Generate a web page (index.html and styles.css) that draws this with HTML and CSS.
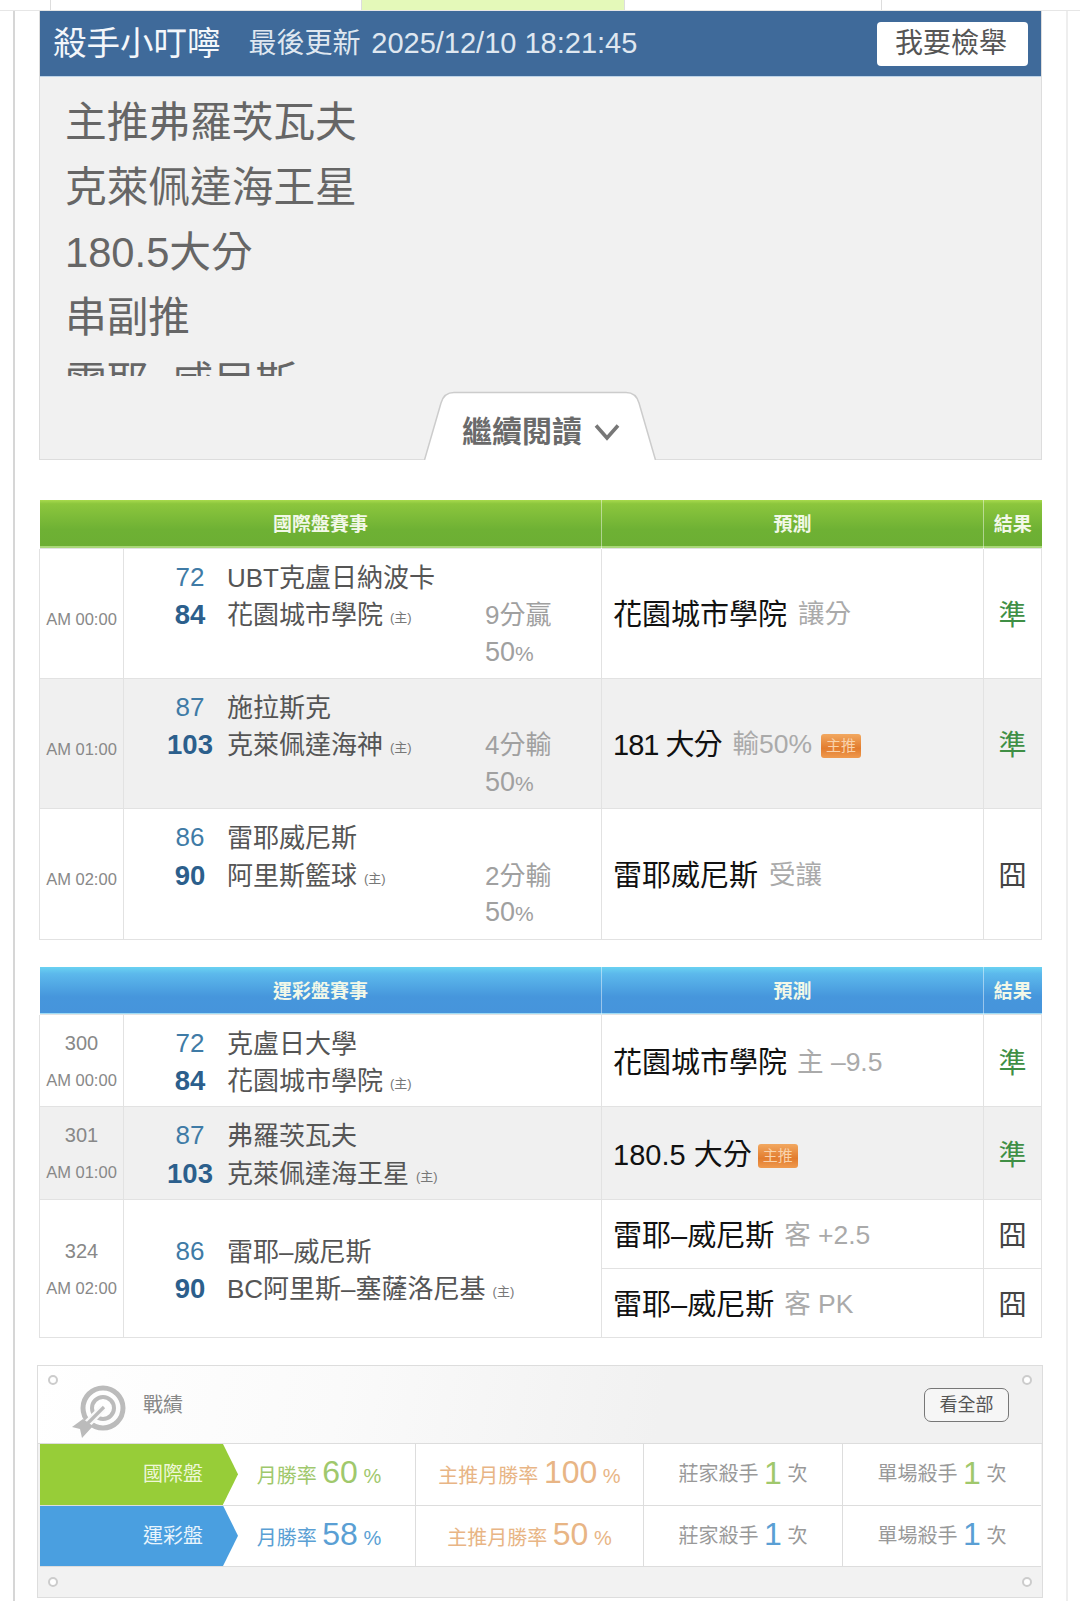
FILE: index.html
```html
<!DOCTYPE html>
<html lang="zh-Hant">
<head>
<meta charset="utf-8">
<title>殺手小叮嚀</title>
<link rel="stylesheet" href="styles.css">
</head>
<body>
<nav class="topband">
  <span class="tb tb-a"></span><span class="tb tb-b"></span><span class="tb tb-c"></span><span class="tb tb-d"></span>
</nav>
<main class="frame">
  <section class="panel">
    <header class="panel-head">
      <span class="author">殺手小叮嚀</span>
      <span class="updated">最後更新 <span class="stamp">2025/12/10 18:21:45</span></span>
      <button class="report">我要檢舉</button>
    </header>
    <div class="panel-body">
      <div class="article">
        <p>主推弗羅茨瓦夫</p>
        <p>克萊佩達海王星</p>
        <p>180.5大分</p>
        <p>串副推</p>
        <p>雷耶–威尼斯</p>
      </div>
    </div>
    <div class="more">
      <svg class="more-shape" viewBox="0 0 232 69" width="232" height="69"><path d="M0.5 69 L17 12 Q20 1.5 30 1.5 L202 1.5 Q212 1.5 215 12 L231.5 69" fill="#fff" stroke="#ccc" stroke-width="1.5"/></svg>
      <span class="more-text">繼續閱讀</span>
      <svg class="more-chev" viewBox="0 0 26 18" width="26" height="18"><path d="M2 2.5 L13 15 L24 2.5" fill="none" stroke="#777" stroke-width="3.6"/></svg>
    </div>
  </section>

  <table class="games green">
    <colgroup><col class="c1"><col class="c2"><col class="c3"><col class="c4"></colgroup>
    <thead><tr><th colspan="2">國際盤賽事</th><th>預測</th><th>結果</th></tr></thead>
    <tbody>
      <tr class="r130">
        <td class="time"><span class="t offset">AM 00:00</span></td>
        <td><div class="match"><span class="s">72</span><span class="n">UBT克盧日納波卡</span><span class="gap"></span><b class="s">84</b><span class="n">花園城市學院<small>(主)</small></span><span class="res">9分贏</span><span class="s"></span><span class="n"></span><span class="res pct">50<i>%</i></span></div></td>
        <td class="pred"><span class="pick">花園城市學院</span><span class="sub sp">讓分</span></td>
        <td class="out win">準</td>
      </tr>
      <tr class="r130 alt">
        <td class="time"><span class="t offset">AM 01:00</span></td>
        <td><div class="match"><span class="s">87</span><span class="n">施拉斯克</span><span class="gap"></span><b class="s">103</b><span class="n">克萊佩達海神<small>(主)</small></span><span class="res">4分輸</span><span class="s"></span><span class="n"></span><span class="res pct">50<i>%</i></span></div></td>
        <td class="pred"><span class="pick tight">181 大分</span><span class="sub sp">輸50%</span><span class="badge">主推</span></td>
        <td class="out win">準</td>
      </tr>
      <tr class="r131">
        <td class="time"><span class="t offset">AM 02:00</span></td>
        <td><div class="match"><span class="s">86</span><span class="n">雷耶威尼斯</span><span class="gap"></span><b class="s">90</b><span class="n">阿里斯籃球<small>(主)</small></span><span class="res">2分輸</span><span class="s"></span><span class="n"></span><span class="res pct">50<i>%</i></span></div></td>
        <td class="pred"><span class="pick">雷耶威尼斯</span><span class="sub sp">受讓</span></td>
        <td class="out">囧</td>
      </tr>
    </tbody>
  </table>

  <table class="games blue">
    <colgroup><col class="c1"><col class="c2"><col class="c3"><col class="c4"></colgroup>
    <thead><tr><th colspan="2">運彩盤賽事</th><th>預測</th><th>結果</th></tr></thead>
    <tbody>
      <tr class="r92">
        <td class="time"><span class="no">300</span><span class="t">AM 00:00</span></td>
        <td><div class="match two"><span class="s">72</span><span class="n">克盧日大學</span><b class="s">84</b><span class="n">花園城市學院<small>(主)</small></span></div></td>
        <td class="pred"><span class="pick">花園城市學院</span><span class="sub">主 –9.5</span></td>
        <td class="out win">準</td>
      </tr>
      <tr class="r93 alt">
        <td class="time"><span class="no">301</span><span class="t">AM 01:00</span></td>
        <td><div class="match two"><span class="s">87</span><span class="n">弗羅茨瓦夫</span><b class="s">103</b><span class="n">克萊佩達海王星<small>(主)</small></span></div></td>
        <td class="pred"><span class="pick">180.5 大分</span><span class="badge">主推</span></td>
        <td class="out win">準</td>
      </tr>
      <tr class="r69">
        <td class="time" rowspan="2"><span class="no">324</span><span class="t">AM 02:00</span></td>
        <td rowspan="2"><div class="match two"><span class="s">86</span><span class="n">雷耶–威尼斯</span><b class="s">90</b><span class="n">BC阿里斯–塞薩洛尼基<small>(主)</small></span></div></td>
        <td class="pred"><span class="pick">雷耶–威尼斯</span><span class="sub">客 +2.5</span></td>
        <td class="out">囧</td>
      </tr>
      <tr class="r69">
        <td class="pred"><span class="pick">雷耶–威尼斯</span><span class="sub">客 PK</span></td>
        <td class="out">囧</td>
      </tr>
    </tbody>
  </table>

  <section class="stats">
    <span class="dot d-tl"></span><span class="dot d-tr"></span><span class="dot d-bl"></span><span class="dot d-br"></span>
    <header class="stats-head">
      <svg class="target" viewBox="0 0 60 62" width="60" height="62">
        <circle cx="33" cy="27" r="20" fill="none" stroke="#bbb" stroke-width="5"/>
        <circle cx="33" cy="27" r="11" fill="none" stroke="#bbb" stroke-width="4"/>
        <path d="M33 27 L12 48" stroke="#fafafa" stroke-width="8"/>
        <path d="M34 26 L15 45" stroke="#bbb" stroke-width="3.2"/>
        <path d="M2 46 L13 38 L23 45 L12 57 L10 48 Z" fill="#bbb"/>
      </svg>
      <h2 class="stats-title">戰績</h2>
      <a class="all">看全部</a>
    </header>
    <div class="stats-grid g">
      <div class="lab">國際盤</div>
      <div class="cell"><span class="cg">月勝率 <em>60</em> %</span></div>
      <div class="cell"><span class="co">主推月勝率 <em>100</em> %</span></div>
      <div class="cell">莊家殺手 <em class="cg">1</em> 次</div>
      <div class="cell">單場殺手 <em class="cg">1</em> 次</div>
    </div>
    <div class="stats-grid b">
      <div class="lab">運彩盤</div>
      <div class="cell"><span class="cb">月勝率 <em>58</em> %</span></div>
      <div class="cell"><span class="co">主推月勝率 <em>50</em> %</span></div>
      <div class="cell">莊家殺手 <em class="cb">1</em> 次</div>
      <div class="cell">單場殺手 <em class="cb">1</em> 次</div>
    </div>
    <div class="stats-foot"></div>
  </section>
</main>
</body>
</html>
```
FILE: styles.css
```css
* { box-sizing: border-box; }
html, body { margin: 0; padding: 0; }
body {
  background: #fff;
  width: 1080px;
  height: 1601px;
  overflow: hidden;
  font-family: "Liberation Sans", "Noto Sans CJK TC", sans-serif;
}
.topband {
  display: flex;
  height: 11px;
  padding: 0 40px 0 50px;
  border-bottom: 1px solid #e6e6e6;
}
.tb { display: block; border-left: 1px solid #ddd; }
.tb-a { width: 311px; }
.tb-b { width: 263px; background: #e4f9b9; }
.tb-c { width: 257px; }
.tb-d { width: 159px; }
.frame {
  margin: 0 12px 0 13px;
  height: 1590px;
  padding: 0 25px 0 24px;
  border-left: 2px solid #d6d6d6;
  border-right: 2px solid #eee;
}
/* article panel */
.panel {
  position: relative;
  height: 449px;
  margin-right: -1px;
  background: #f1f1f1;
  border: 1px solid #ddd;
  border-top: 0;
}
.panel-head {
  display: flex;
  align-items: center;
  height: 66px;
  padding: 0 13px;
  background: #3f6a9a;
  border-bottom: 1px solid #bcd3e8;
  color: #fff;
}
.author { font-size: 33.5px; line-height: 1; color: #f4f7fb; }
.updated { margin-left: 28px; font-size: 28px; line-height: 1; color: #dfe7f0; }
.stamp { margin-left: 3px; font-size: 29px; }
.report {
  margin-left: auto;
  width: 151px;
  height: 44px;
  padding: 0 3px 0 0;
  border: 0;
  border-radius: 4px;
  background: #fff;
  color: #555;
  font: inherit;
  font-size: 28px;
  line-height: 44px;
}
.panel-body { padding: 13px 0 0 25px; }
.article { height: 286px; overflow: hidden; color: #666; font-size: 41.7px; line-height: 65px; }
.article p { margin: 0; }
.more {
  position: absolute;
  left: 384px;
  bottom: -1px;
  width: 232px;
  height: 69px;
  display: flex;
  align-items: center;
  justify-content: center;
  gap: 12px;
  padding: 12px 0 0 2px;
}
.more-shape { position: absolute; left: 0; top: 0; }
.more-text { position: relative; font-size: 30px; font-weight: 700; color: #6a6a6a; line-height: 1; }
.more-chev { position: relative; }
/* tables */
.games {
  width: 1002px;
  margin-top: 40px;
  border-collapse: collapse;
  table-layout: fixed;
}
.blue { margin-top: 27px; }
.c1 { width: 84px; }
.c2 { width: 478px; }
.c3 { width: 382px; }
.c4 { width: 58px; }
.games th {
  height: 48px;
  padding: 0 0 2px;
  font-size: 19px;
  font-weight: 700;
  color: #f2f8e8;
  border-left: 1px solid rgba(255, 255, 255, .45);
}
.green thead tr {
  background: linear-gradient(#a8da4d 0, #8cc63d 8%, #6eb134 62%, #6cae33 100%);
  box-shadow: inset 0 -2px 0 #a9d878;
}
.blue thead tr {
  background: linear-gradient(#6ad2f2 0, #5cb9ec 14%, #4696dc 62%, #4694db 100%);
  box-shadow: inset 0 -2px 0 #9fdcf6;
}
.games td { padding: 0; border: 1px solid #e2e2e2; vertical-align: middle; }
.r130 td { height: 130px; }
.r131 td { height: 131px; }
.r92 td { height: 92px; }
.r93 td { height: 93px; }
.r69 td { height: 69px; }
.alt td { background: #f0f0f0; }
.time { text-align: center; color: #888; padding-top: 2px !important; }
.t { display: block; font-size: 16.5px; line-height: 37px; }
.offset { padding-top: 10px; }
.no { display: block; font-size: 20px; line-height: 37px; }
.match {
  display: grid;
  grid-template-columns: 60px 265px 1fr;
  grid-auto-rows: 37.5px;
  align-items: center;
  padding: 3px 0 0 36px;
  font-size: 26px;
  color: #555;
}
.match.two { grid-template-columns: 60px 1fr; }
.s { text-align: center; color: #3f7ba6; font-weight: 400; }
b.s { padding-top: 1px; color: #2c5f8c; font-weight: 700; font-size: 27.5px; }
.n { padding: 0 0 4px 7px; white-space: nowrap; }
.n small { margin-left: 7px; font-size: 13px; color: #777; vertical-align: 2px; }
.res { padding-bottom: 4px; color: #a0a0a0; }
.pct { padding-bottom: 0; font-size: 27px; }
.res i { font-style: normal; font-size: 21px; }
.pred { padding: 0 0 2px 11px !important; white-space: nowrap; }
.pick { font-size: 29px; color: #111; }
.tight { letter-spacing: -1px; }
.sub { margin-left: 10px; font-size: 26.5px; color: #aaa; vertical-align: 2px; }
.sp { margin-left: 11px; }
.badge {
  display: inline-block;
  margin-left: 6px;
  width: 40px;
  height: 24px;
  border-radius: 3px;
  background: linear-gradient(#f2a860, #e27c2e 60%, #ef9a4e);
  color: #f9d3ac;
  font-size: 15px;
  line-height: 24px;
  text-align: center;
  vertical-align: 4px;
}
.sub + .badge { margin-left: 9px; }
.out { text-align: center; font-size: 28px; color: #444; }
.win { color: #3f8f45; }
/* stats */
.stats {
  position: relative;
  margin: 27px -2px 0 -2px;
  height: 233px;
  border: 1px solid #ddd;
  background: #f2f2f2;
}
.dot {
  position: absolute;
  width: 10px;
  height: 10px;
  border: 2px solid #ccc;
  border-radius: 50%;
  background: #fff;
}
.d-tl { left: 10px; top: 9px; }
.d-tr { right: 10px; top: 9px; }
.d-bl { left: 10px; bottom: 10px; }
.d-br { right: 10px; bottom: 10px; }
.stats-head {
  display: flex;
  align-items: center;
  height: 78px;
  padding: 0 33px 0 32px;
  background: linear-gradient(100deg, #fff 0, #fafafa 30%, #f1f1f1 62%);
  border-bottom: 1px solid #ddd;
}
.target { flex: none; margin-top: 14px; }
.stats-title { margin: 0 0 2px 13px; font-size: 20px; font-weight: 400; color: #888; }
.all {
  margin-left: auto;
  width: 85px;
  height: 34px;
  margin-top: 1px;
  border: 1px solid #777;
  border-radius: 7px;
  background: #f6f6f6;
  color: #555;
  font-size: 18px;
  line-height: 32px;
  text-align: center;
}
.stats-grid {
  display: grid;
  grid-template-columns: 183px 193px 228px 199px 198px;
  height: 61.5px;
  margin: 0 1px 0 2px;
  background: #fff;
  border-bottom: 1px solid #ddd;
  font-size: 20px;
  color: #999;
}
.lab {
  position: relative;
  display: flex;
  align-items: center;
  justify-content: flex-end;
  padding: 0 20px 3px 0;
  color: #eef7d8;
}
.lab::after {
  content: "";
  position: absolute;
  left: 100%;
  top: 0;
  width: 15px;
  height: 100%;
  clip-path: polygon(0 0, 100% 50%, 0 100%);
}
.g .lab, .g .lab::after { background: #97cd38; }
.b .lab, .b .lab::after { background: #4a9fe0; color: #e8f4fc; }
.cell {
  display: flex;
  align-items: center;
  justify-content: center;
  padding-bottom: 3px;
  white-space: pre;
  border-right: 1px solid #ddd;
}
.cell:last-child { border-right: 0; }
.cell em { font-style: normal; font-size: 32px; line-height: 1; }
.cg { color: #a0c86c; }
.cb { color: #5a9fd4; }
.co { color: #e8b585; }
.stats-foot { height: 31px; }
```
